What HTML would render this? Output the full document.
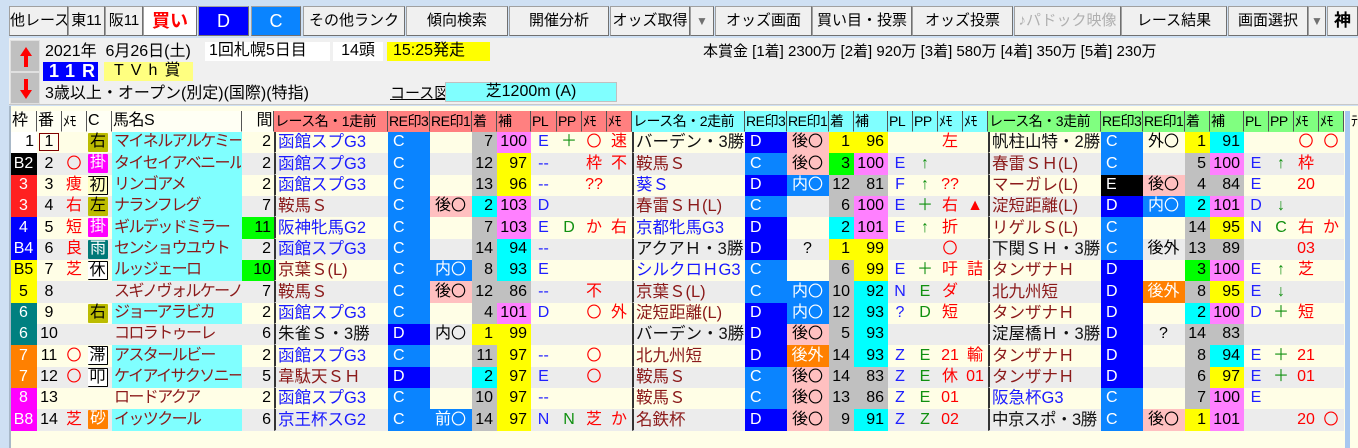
<!DOCTYPE html><html><head><meta charset="utf-8"><style>
*{margin:0;padding:0;box-sizing:border-box}
body{width:1358px;height:448px;overflow:hidden;background:#cfe0f3;font-family:"Liberation Sans","Noto Sans CJK JP",sans-serif;position:relative;color:#000}
.tb{position:absolute;top:6px;height:30px;background:#f0f0f0;border:1px solid #a0a0a0;border-right-color:#707070;border-bottom-color:#707070;font-size:15px;text-align:center;line-height:28px;white-space:nowrap;overflow:hidden}
#info{position:absolute;left:9px;top:38px;width:1349px;height:67px;background:#f0f0f0;border-bottom:1px solid #c8c8c8}
.ab{position:absolute;width:30px;height:32px;background:#c0c0c0;border:1px solid #e0e0e0;left:1px}
.ab svg{position:absolute;left:8px;top:5px}
#main{position:absolute;left:9px;top:106px;width:1349px;height:342px;background:#fffee8;border-left:2px solid #a8b8c8}
.t{position:absolute;font-size:16px;white-space:nowrap;line-height:18px}
table{position:absolute;left:11px;top:111px;border-collapse:separate;border-spacing:0;table-layout:fixed;width:1333px;font-size:16px}
td{border-right:1px solid transparent;border-bottom:1px solid transparent;background-clip:padding-box;white-space:nowrap;overflow:hidden;padding:0 2px;line-height:18px;height:21px;vertical-align:middle}
tr:nth-child(3n) td{height:22px}
tr.h td{height:21px;background:#fffff4;padding:0 1px;border-right:1px solid #555;font-size:14px;letter-spacing:-0.5px}
tr.h td.x1{background:#ff8080}tr.h td.x2{background:#80ffff}tr.h td.x3{background:#80ff80}
tr.a{background:#fffee6}tr.b{background:#ececec}
.k1{background:#fff;text-align:right}.k2{background:#000;color:#fff;text-align:center}.k3{background:#ff2020;color:#fff;text-align:center}.k4{background:#0000ff;color:#fff;text-align:center}.k5{background:#ffff00;text-align:center}.k6{background:#008080;color:#fff;text-align:center}.k7{background:#ff8000;color:#fff;text-align:center}.k8{background:#ff00ff;color:#fff;text-align:center}
.bn{text-align:center}.bx{display:inline-block;width:20px;border:1px solid #800000;background:#fffff0;line-height:16px;height:18px;vertical-align:top}
.me{color:#f00;text-align:center}.pl{color:#2020ff;text-align:center}.pp{color:#109010;text-align:center}
.o{font-family:"Noto Sans CJK JP",sans-serif;font-size:15px;display:inline-block;height:18px;line-height:16px;vertical-align:top;overflow:hidden}
.ic{padding:0 1px}.i{display:inline-block;width:20px;height:19px;line-height:18px;text-align:center;border-radius:1px;vertical-align:top}
.ol{background:#bcbc00}.mg{background:#ff00ff;color:#fff}.wb{border:1px solid #000;border-left:none;background:#fff}.yb{border:1px solid #000;border-left:none;background:#ffffc0}.tl{background:#007878;color:#fff}.og{background:#ff8000;color:#fff}
.hn{background:#80ffff;color:#8b1a1a;letter-spacing:-1.6px}.hn0{color:#8b1a1a;letter-spacing:-1.6px}
.ma{text-align:right}.gn{background:#00ff00}
.rn{border-left:2px solid #333;font-size:16.5px}.rb{color:#1a1aff}.rr{color:#8b1a1a}.rk{color:#111}
.C{background:#0a84ff;color:#fff;padding-left:5px}.D{background:#0000ff;color:#fff;padding-left:5px}.E{background:#000;color:#fff;padding-left:5px}
.pk{background:#ffc0c0;text-align:center}.bl{background:#0a84ff;color:#fff;text-align:center}.or{background:#ff8000;color:#fff;text-align:center}.ce{text-align:center}
.n{text-align:right;padding-right:3px}.g{background:#c0c0c0}.y{background:#ffff00}.c{background:#00ffff}.gr{background:#00ff00}.m{background:#ff80ff}
</style></head><body>
<div class="tb" style="left:9px;width:59px">他レース</div>
<div class="tb" style="left:68px;width:37px">東11</div>
<div class="tb" style="left:105px;width:38px">阪11</div>
<div class="tb" style="left:143px;width:54px;background:#fff;color:#f00;font-weight:bold;font-size:18px">買い</div>
<div class="tb" style="left:198px;width:51px;background:#0000ff;color:#fff;font-size:18px">D</div>
<div class="tb" style="left:251px;width:50px;background:#0a84ff;color:#fff;font-size:18px">C</div>
<div class="tb" style="left:303px;width:102px">その他ランク</div>
<div class="tb" style="left:406px;width:102px">傾向検索</div>
<div class="tb" style="left:509px;width:100px">開催分析</div>
<div class="tb" style="left:610px;width:80px">オッズ取得</div>
<div class="tb" style="left:690px;width:24px;color:#707070;font-size:12px">▼</div>
<div class="tb" style="left:715px;width:97px">オッズ画面</div>
<div class="tb" style="left:812px;width:100px">買い目・投票</div>
<div class="tb" style="left:912px;width:101px">オッズ投票</div>
<div class="tb" style="left:1014px;width:107px;color:#b0b0b0">♪パドック映像</div>
<div class="tb" style="left:1121px;width:106px">レース結果</div>
<div class="tb" style="left:1228px;width:80px">画面選択</div>
<div class="tb" style="left:1308px;width:18px;color:#707070;font-size:12px">▼</div>
<div class="tb" style="left:1327px;width:31px;font-weight:bold;font-size:17px">神</div>
<div id="info">
<div class="ab" style="top:2px"><svg width="14" height="22"><path d="M7 1 L1 10 H5 V21 H9 V10 H13 Z" fill="#f00"/></svg></div>
<div class="ab" style="top:34px"><svg width="14" height="22"><path d="M7 21 L1 12 H5 V1 H9 V12 H13 Z" fill="#f00"/></svg></div>
<div class="t" style="left:36px;top:5px">2021年&nbsp; 6月26日(土)</div>
<div class="t" style="left:196px;top:4px;width:125px;height:19px;background:#fff;padding-left:4px">1回札幌5日目</div>
<div class="t" style="left:324px;top:4px;width:50px;height:19px;background:#fff;text-align:center">14頭</div>
<div class="t" style="left:378px;top:4px;width:103px;height:19px;background:#ffff00;padding-left:6px">15:25発走</div>
<div class="t" style="left:34px;top:24px;width:55px;height:19px;background:#0000ff;color:#fff;letter-spacing:7px;padding-left:6px;font-size:18px;font-weight:bold">11R</div>
<div class="t" style="left:95px;top:24px;width:89px;height:19px;background:#ffff80;letter-spacing:7px;padding-left:10px">TVh賞</div>
<div class="t" style="left:36px;top:47px">3歳以上・オープン(別定)(国際)(特指)</div>
<div class="t" style="left:381px;top:47px;text-decoration:underline;font-size:15px">コース図</div>
<div class="t" style="left:436px;top:44px;width:172px;height:20px;background:#80ffff;border:1px solid #c0c0c0;text-align:center">芝1200m (A)</div>
<div class="t" style="left:694px;top:5px;font-size:15px">本賞金 [1着] 2300万 [2着] 920万 [3着] 580万 [4着] 350万 [5着] 230万</div>
</div>
<div id="main"></div>
<div style="position:absolute;left:1345px;top:111px;width:5px;height:337px;background:#a8c8f0"></div>
<div class="t" style="left:1351px;top:112px;font-size:14px">ﾃ</div>
<table>
<colgroup><col style="width:26px"><col style="width:25px"><col style="width:25px"><col style="width:25px"><col style="width:130px"><col style="width:32px">
<col style="width:114px"><col style="width:42px"><col style="width:42px"><col style="width:25px"><col style="width:34px"><col style="width:26px"><col style="width:25px"><col style="width:25px"><col style="width:25px">
<col style="width:113px"><col style="width:42px"><col style="width:42px"><col style="width:25px"><col style="width:34px"><col style="width:25px"><col style="width:25px"><col style="width:25px"><col style="width:25px">
<col style="width:113px"><col style="width:42px"><col style="width:42px"><col style="width:25px"><col style="width:34px"><col style="width:25px"><col style="width:25px"><col style="width:25px"><col style="width:25px"></colgroup>
<tr class="h"><td style="font-size:16px">枠</td><td style="font-size:16px">番</td><td>ﾒﾓ</td><td style="font-size:16px">C</td><td style="font-size:16px">馬名S</td><td style="text-align:right;font-size:16px">間</td>
<td class="x1">レース名・1走前</td><td class="x1">RE印3</td><td class="x1">RE印1</td><td class="x1">着</td><td class="x1">補</td><td class="x1">PL</td><td class="x1">PP</td><td class="x1">ﾒﾓ</td><td class="x1">ﾒﾓ</td>
<td class="x2">レース名・2走前</td><td class="x2">RE印3</td><td class="x2">RE印1</td><td class="x2">着</td><td class="x2">補</td><td class="x2">PL</td><td class="x2">PP</td><td class="x2">ﾒﾓ</td><td class="x2">ﾒﾓ</td>
<td class="x3">レース名・3走前</td><td class="x3">RE印3</td><td class="x3">RE印1</td><td class="x3">着</td><td class="x3">補</td><td class="x3">PL</td><td class="x3">PP</td><td class="x3">ﾒﾓ</td><td class="x3">ﾒﾓ</td></tr>

<tr class="a"><td class="k1">1</td><td class="bn"><span class="bx">1</span></td><td class="me"></td><td class="ic"><span class="i ol">右</span></td><td class="hn">マイネルアルケミー</td><td class="ma">2</td>
<td class="rn rb">函館スプG3</td><td class="C">C</td><td></td><td class="n g">7</td><td class="n m">100</td><td class="pl">E</td><td class="pp">＋</td><td class="me"><span class="o">〇</span></td><td class="me">速</td>
<td class="rn rk">バーデン・3勝</td><td class="D">D</td><td class="pk">後<span class="o">〇</span></td><td class="n y">1</td><td class="n y">96</td><td></td><td></td><td class="me">左</td><td></td>
<td class="rn rk">帆柱山特・2勝</td><td class="C">C</td><td class="ce">外<span class="o">〇</span></td><td class="n y">1</td><td class="n c">91</td><td></td><td></td><td class="me"><span class="o">〇</span></td><td class="me"><span class="o">〇</span></td></tr>

<tr class="b"><td class="k2">B2</td><td class="bn">2</td><td class="me"><span class="o">〇</span></td><td class="ic"><span class="i mg">掛</span></td><td class="hn">タイセイアベニール</td><td class="ma">2</td>
<td class="rn rb">函館スプG3</td><td class="C">C</td><td></td><td class="n g">12</td><td class="n y">97</td><td class="pl">--</td><td></td><td class="me">枠</td><td class="me">不</td>
<td class="rn rr">鞍馬Ｓ</td><td class="C">C</td><td class="pk">後<span class="o">〇</span></td><td class="n gr">3</td><td class="n m">100</td><td class="pl">E</td><td class="pp">↑</td><td></td><td></td>
<td class="rn rr">春雷ＳＨ(L)</td><td class="C">C</td><td></td><td class="n g">5</td><td class="n m">100</td><td class="pl">E</td><td class="pp">↑</td><td class="me">枠</td><td></td></tr>

<tr class="a"><td class="k3">3</td><td class="bn">3</td><td class="me">痩</td><td class="ic"><span class="i yb">初</span></td><td class="hn">リンゴアメ</td><td class="ma">2</td>
<td class="rn rb">函館スプG3</td><td class="C">C</td><td></td><td class="n g">13</td><td class="n y">96</td><td class="pl">--</td><td></td><td class="me">??</td><td></td>
<td class="rn rb">葵Ｓ</td><td class="D">D</td><td class="bl">内<span class="o">〇</span></td><td class="n g">12</td><td class="n g">81</td><td class="pl">F</td><td class="pp">↑</td><td class="me">??</td><td></td>
<td class="rn rr">マーガレ(L)</td><td class="E">E</td><td class="pk">後<span class="o">〇</span></td><td class="n g">4</td><td class="n g">84</td><td class="pl">E</td><td></td><td class="me">20</td><td></td></tr>

<tr class="b"><td class="k3">3</td><td class="bn">4</td><td class="me">右</td><td class="ic"><span class="i ol">左</span></td><td class="hn">ナランフレグ</td><td class="ma">7</td>
<td class="rn rr">鞍馬Ｓ</td><td class="C">C</td><td class="pk">後<span class="o">〇</span></td><td class="n c">2</td><td class="n m">103</td><td class="pl">D</td><td></td><td></td><td></td>
<td class="rn rr">春雷ＳＨ(L)</td><td class="C">C</td><td></td><td class="n g">6</td><td class="n m">100</td><td class="pl">E</td><td class="pp">＋</td><td class="me">右</td><td class="me">▲</td>
<td class="rn rr">淀短距離(L)</td><td class="D">D</td><td class="bl">内<span class="o">〇</span></td><td class="n c">2</td><td class="n m">101</td><td class="pl">D</td><td class="pp">↓</td><td></td><td></td></tr>

<tr class="a"><td class="k4">4</td><td class="bn">5</td><td class="me">短</td><td class="ic"><span class="i mg">掛</span></td><td class="hn">ギルデッドミラー</td><td class="ma gn">11</td>
<td class="rn rb">阪神牝馬G2</td><td class="C">C</td><td></td><td class="n g">7</td><td class="n m">103</td><td class="pl">E</td><td class="pp">D</td><td class="me">か</td><td class="me">右</td>
<td class="rn rb">京都牝馬G3</td><td class="D">D</td><td></td><td class="n c">2</td><td class="n m">101</td><td class="pl">E</td><td class="pp">↑</td><td class="me">折</td><td></td>
<td class="rn rr">リゲルＳ(L)</td><td class="C">C</td><td></td><td class="n g">14</td><td class="n y">95</td><td class="pl">N</td><td class="pp">C</td><td class="me">右</td><td class="me">か</td></tr>

<tr class="b"><td class="k4">B4</td><td class="bn">6</td><td class="me">良</td><td class="ic"><span class="i tl">雨</span></td><td class="hn">センショウユウト</td><td class="ma">2</td>
<td class="rn rb">函館スプG3</td><td class="C">C</td><td></td><td class="n g">14</td><td class="n c">94</td><td class="pl">--</td><td></td><td></td><td></td>
<td class="rn rk">アクアＨ・3勝</td><td class="D">D</td><td class="ce">?</td><td class="n y">1</td><td class="n y">99</td><td></td><td></td><td class="me"><span class="o">〇</span></td><td></td>
<td class="rn rk">下関ＳＨ・3勝</td><td class="C">C</td><td class="ce">後外</td><td class="n g">13</td><td class="n g">89</td><td></td><td></td><td class="me">03</td><td></td></tr>

<tr class="a"><td class="k5">B5</td><td class="bn">7</td><td class="me">芝</td><td class="ic"><span class="i wb">休</span></td><td class="hn">ルッジェーロ</td><td class="ma gn">10</td>
<td class="rn rr">京葉Ｓ(L)</td><td class="C">C</td><td class="bl">内<span class="o">〇</span></td><td class="n g">8</td><td class="n c">93</td><td class="pl">E</td><td></td><td></td><td></td>
<td class="rn rb">シルクロＨG3</td><td class="C">C</td><td></td><td class="n g">6</td><td class="n y">99</td><td class="pl">E</td><td class="pp">＋</td><td class="me">吁</td><td class="me">詰</td>
<td class="rn rr">タンザナＨ</td><td class="D">D</td><td></td><td class="n gr">3</td><td class="n m">100</td><td class="pl">E</td><td class="pp">↑</td><td class="me">芝</td><td></td></tr>

<tr class="b"><td class="k5">5</td><td class="bn">8</td><td class="me"></td><td class="ic"></td><td class="hn0">スギノヴォルケーノ</td><td class="ma">7</td>
<td class="rn rr">鞍馬Ｓ</td><td class="C">C</td><td class="pk">後<span class="o">〇</span></td><td class="n g">12</td><td class="n g">86</td><td class="pl">--</td><td></td><td class="me">不</td><td></td>
<td class="rn rr">京葉Ｓ(L)</td><td class="C">C</td><td class="bl">内<span class="o">〇</span></td><td class="n g">10</td><td class="n c">92</td><td class="pl">N</td><td class="pp">E</td><td class="me">ダ</td><td></td>
<td class="rn rr">北九州短</td><td class="D">D</td><td class="or">後外</td><td class="n g">8</td><td class="n y">95</td><td class="pl">E</td><td class="pp">↓</td><td></td><td></td></tr>

<tr class="a"><td class="k6">6</td><td class="bn">9</td><td class="me"></td><td class="ic"><span class="i ol">右</span></td><td class="hn">ジョーアラビカ</td><td class="ma">2</td>
<td class="rn rb">函館スプG3</td><td class="C">C</td><td></td><td class="n g">4</td><td class="n m">101</td><td class="pl">D</td><td></td><td class="me"><span class="o">〇</span></td><td class="me">外</td>
<td class="rn rr">淀短距離(L)</td><td class="D">D</td><td class="bl">内<span class="o">〇</span></td><td class="n g">12</td><td class="n c">93</td><td class="pl">?</td><td class="pp">D</td><td class="me">短</td><td></td>
<td class="rn rr">タンザナＨ</td><td class="D">D</td><td></td><td class="n c">2</td><td class="n m">100</td><td class="pl">D</td><td class="pp">＋</td><td class="me">短</td><td></td></tr>

<tr class="b"><td class="k6">6</td><td class="bn">10</td><td class="me"></td><td class="ic"></td><td class="hn0">コロラトゥーレ</td><td class="ma">6</td>
<td class="rn rk">朱雀Ｓ・3勝</td><td class="D">D</td><td class="ce">内<span class="o">〇</span></td><td class="n y">1</td><td class="n y">99</td><td></td><td></td><td></td><td></td>
<td class="rn rk">バーデン・3勝</td><td class="D">D</td><td class="pk">後<span class="o">〇</span></td><td class="n g">5</td><td class="n c">93</td><td></td><td></td><td></td><td></td>
<td class="rn rk">淀屋橋Ｈ・3勝</td><td class="D">D</td><td class="ce">?</td><td class="n g">14</td><td class="n g">83</td><td></td><td></td><td></td><td></td></tr>

<tr class="a"><td class="k7">7</td><td class="bn">11</td><td class="me"><span class="o">〇</span></td><td class="ic"><span class="i wb">滞</span></td><td class="hn">アスタールビー</td><td class="ma">2</td>
<td class="rn rb">函館スプG3</td><td class="C">C</td><td></td><td class="n g">11</td><td class="n y">97</td><td class="pl">--</td><td></td><td class="me"><span class="o">〇</span></td><td></td>
<td class="rn rr">北九州短</td><td class="D">D</td><td class="or">後外</td><td class="n g">14</td><td class="n c">93</td><td class="pl">Z</td><td class="pp">E</td><td class="me">21</td><td class="me">輸</td>
<td class="rn rr">タンザナＨ</td><td class="D">D</td><td></td><td class="n g">8</td><td class="n c">94</td><td class="pl">E</td><td class="pp">＋</td><td class="me">21</td><td></td></tr>

<tr class="b"><td class="k7">7</td><td class="bn">12</td><td class="me"><span class="o">〇</span></td><td class="ic"><span class="i wb">叩</span></td><td class="hn">ケイアイサクソニー</td><td class="ma">5</td>
<td class="rn rr">韋駄天ＳＨ</td><td class="D">D</td><td></td><td class="n c">2</td><td class="n y">97</td><td class="pl">E</td><td></td><td class="me"><span class="o">〇</span></td><td></td>
<td class="rn rr">鞍馬Ｓ</td><td class="C">C</td><td class="pk">後<span class="o">〇</span></td><td class="n g">14</td><td class="n g">83</td><td class="pl">Z</td><td class="pp">E</td><td class="me">休</td><td class="me">01</td>
<td class="rn rr">タンザナＨ</td><td class="D">D</td><td></td><td class="n g">6</td><td class="n y">97</td><td class="pl">E</td><td class="pp">＋</td><td class="me">01</td><td></td></tr>

<tr class="a"><td class="k8">8</td><td class="bn">13</td><td class="me"></td><td class="ic"></td><td class="hn0">ロードアクア</td><td class="ma">2</td>
<td class="rn rb">函館スプG3</td><td class="C">C</td><td></td><td class="n g">10</td><td class="n y">97</td><td class="pl">--</td><td></td><td></td><td></td>
<td class="rn rr">鞍馬Ｓ</td><td class="C">C</td><td class="pk">後<span class="o">〇</span></td><td class="n g">13</td><td class="n g">86</td><td class="pl">Z</td><td class="pp">E</td><td class="me">01</td><td></td>
<td class="rn rb">阪急杯G3</td><td class="C">C</td><td></td><td class="n g">7</td><td class="n m">100</td><td class="pl">E</td><td></td><td></td><td></td></tr>

<tr class="b"><td class="k8">B8</td><td class="bn">14</td><td class="me">芝</td><td class="ic"><span class="i og">砂</span></td><td class="hn">イッツクール</td><td class="ma">6</td>
<td class="rn rb">京王杯スG2</td><td class="C">C</td><td class="bl">前<span class="o">〇</span></td><td class="n g">14</td><td class="n y">97</td><td class="pl">N</td><td class="pp">N</td><td class="me">芝</td><td class="me">か</td>
<td class="rn rr">名鉄杯</td><td class="D">D</td><td class="pk">後<span class="o">〇</span></td><td class="n g">9</td><td class="n c">91</td><td class="pl">Z</td><td class="pp">Z</td><td class="me">02</td><td></td>
<td class="rn rk" style="letter-spacing:-0.5px">中京スポ・3勝</td><td class="C">C</td><td class="pk">後<span class="o">〇</span></td><td class="n y">1</td><td class="n m">101</td><td></td><td></td><td class="me">20</td><td class="me"><span class="o">〇</span></td></tr>
</table>
</body></html>
